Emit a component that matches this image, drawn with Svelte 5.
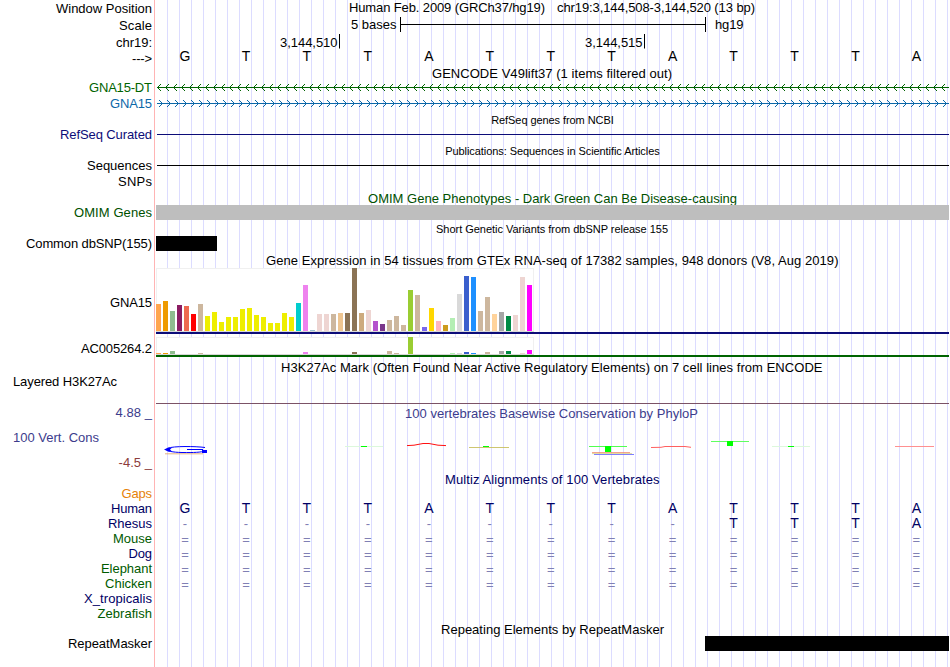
<script>
  const bases = 'GTTTATTTATTTA'.split('')
  const unaligned = Array(13).fill('=')

  // tissue color, GNA15 level, AC005264.2 level
  const tissues = [
    ['#ffa54f', 27, 1], ['#ee9a00', 30, 1], ['#8fbc8f', 20, 3], ['#8b1c62', 26, 0],
    ['#ee6a50', 25, 0], ['#ff0000', 17, 0], ['#cdb79e', 27, 1], ['#eeee00', 15, 0],
    ['#eeee00', 19, 0], ['#eeee00', 9, 0], ['#eeee00', 14, 0], ['#eeee00', 14, 0],
    ['#eeee00', 22, 0], ['#eeee00', 23, 0], ['#eeee00', 16, 0], ['#eeee00', 14, 0],
    ['#eeee00', 8, 0], ['#eeee00', 8, 0], ['#eeee00', 18, 0], ['#eeee00', 14, 0],
    ['#00cdcd', 28, 0], ['#ee82ee', 46, 2], ['#9ac0cd', 1, 0], ['#eed5d2', 17, 0],
    ['#eed5d2', 17, 0], ['#cdb79e', 17, 0], ['#eec591', 18, 0], ['#8b7355', 18, 0],
    ['#8b7355', 63, 2], ['#cdaa7d', 18, 0], ['#eed5d2', 21, 0], ['#b452cd', 10, 0],
    ['#7a378b', 7, 0], ['#cdb79e', 11, 3], ['#cdb79e', 15, 1], ['#cdb79e', 6, 0],
    ['#9acd32', 41, 17], ['#cdb79e', 36, 0], ['#7a67ee', 4, 0], ['#ffd700', 23, 0],
    ['#ffb6c1', 10, 0], ['#cd9b1d', 6, 0], ['#b4eeb4', 13, 1], ['#d9d9d9', 37, 1],
    ['#3a5fcd', 55, 2], ['#1e90ff', 54, 1], ['#cdb79e', 20, 0], ['#cdb79e', 34, 2],
    ['#ffd39b', 17, 0], ['#a6a6a6', 19, 3], ['#008b45', 15, 3], ['#eed5d2', 16, 0],
    ['#eed5d2', 54, 1], ['#ff00ff', 46, 4]
  ]

  // title: [x, baseline, length, text]
  const rows = [
    { h: 16, label: 'Window Position', w: 96, titles: [[193, 12, 196, 'Human Feb. 2009 (GRCh37/hg19)'], [401, 12, 198, 'chr19:3,144,508-3,144,520 (13 bp)']] },
    { h: 17, label: 'Scale', w: 33, kind: 'scale' },
    { h: 17, label: 'chr19:', w: 36, kind: 'ruler' },
    { h: 16, label: '--->', w: 20, kind: 'seq', cells: bases, y: 11 },
    { h: 14, titles: [[276, 12, 240, 'GENCODE V49lift37 (1 items filtered out)']] },
    { h: 15, label: 'GNA15-DT', w: 63, color: '#006400', kind: 'gene', y: 7, dir: -1 },
    { h: 16, label: 'GNA15', w: 42, color: '#0c68a8', kind: 'gene', y: 8, dir: 1 },
    { h: 16, small: true, titles: [[335.2, 13, 122.5, 'RefSeq genes from NCBI']] },
    { h: 15, label: 'RefSeq Curated', w: 92, color: '#0c0c78', kind: 'line', y: 7 },
    { h: 16, small: true, titles: [[289.2, 13, 214.5, 'Publications: Sequences in Scientific Articles']] },
    { h: 15, label: 'Sequences', w: 65, kind: 'line', y: 7 },
    { h: 16, label: 'SNPs', w: 34 },
    { h: 16, color: '#005000', titles: [[212, 14, 369, 'OMIM Gene Phenotypes - Dark Green Can Be Disease-causing']] },
    { h: 15, label: 'OMIM Genes', w: 78, color: '#005000', kind: 'block', x: 0, width: 793, fill: '#bebebe' },
    { h: 16, small: true, titles: [[280, 13, 232, 'Short Genetic Variants from dbSNP release 155']] },
    { h: 15, label: 'Common dbSNP(155)', w: 126, kind: 'block', x: 0, width: 61, fill: '#000000' },
    { h: 17, titles: [[110, 14, 572.5, 'Gene Expression in 54 tissues from GTEx RNA-seq of 17382 samples, 948 donors (V8, Aug 2019)']] },
    { h: 66, label: 'GNA15', w: 42, up: 24, kind: 'gtex', level: 1, top: 0, line: '#0c0c78' },
    { h: 24, label: 'AC005264.2', w: 71, up: 2, kind: 'gtex', level: 2, top: 3, line: '#006400' },
    { h: 16, titles: [[125, 14, 541.5, 'H3K27Ac Mark (Often Found Near Active Regulatory Elements) on 7 cell lines from ENCODE']] },
    { h: 30, label: 'Layered H3K27Ac', w: 104, left: true, up: 15, kind: 'signal' },
    { h: 16, label: '4.88 _', w: 36.5, color: '#3c3c8c', titles: [[249, 14, 293, '100 vertebrates Basewise Conservation by PhyloP']] },
    { h: 51, label: '100 Vert. Cons', w: 86, color: '#3c3c8c', left: true, up: 26, kind: 'phylop', below: '-4.5 _' },
    { h: 15, color: '#000064', titles: [[289, 13, 214.5, 'Multiz Alignments of 100 Vertebrates']] },
    { h: 15, label: 'Gaps', w: 30.5, color: '#e6820a' },
    { h: 15, label: 'Human', w: 41, color: '#000064', kind: 'seq', cells: bases, y: 12 },
    { h: 15, label: 'Rhesus', w: 44, color: '#000064', kind: 'seq', cells: '---------TTTA'.split(''), y: 12 },
    { h: 15, label: 'Mouse', w: 39, color: '#005a00', kind: 'seq', cells: unaligned, y: 13 },
    { h: 15, label: 'Dog', w: 23.5, color: '#000064', kind: 'seq', cells: unaligned, y: 13 },
    { h: 15, label: 'Elephant', w: 51, color: '#005a00', kind: 'seq', cells: unaligned, y: 13 },
    { h: 15, label: 'Chicken', w: 47, color: '#005a00', kind: 'seq', cells: unaligned, y: 13 },
    { h: 15, label: 'X_tropicalis', w: 68, color: '#000064' },
    { h: 15, label: 'Zebrafish', w: 54.5, color: '#005a00' },
    { h: 15, titles: [[285, 13, 223, 'Repeating Elements by RepeatMasker']] },
    { h: 15, label: 'RepeatMasker', w: 84, kind: 'block', x: 549, width: 244, fill: '#000000' },
    { h: 16 }
  ]

  function arrows(y, dir) {
    let d = ''
    for (let i = 0; i < 99; i++) {
      const x = (dir < 0 ? 1 : 6) + i * 8
      // pixel steps of the chevron, one square per row
      for (let s = 1; s <= 3; s++) {
        d += `M${x - dir * s} ${y - s}h1v1h-1zM${x - dir * s} ${y + s}h1v1h-1z`
      }
    }
    return d
  }
</script>

<div class="browser">
  {#each rows as row}
    <div class="row" style="height: {row.h}px; color: {row.color || '#000000'}">
      <div class="side">
        <svg width="154" height={row.h}>
          {#if row.label}
            <text
              x={row.left ? 13 : 152}
              y={row.h - 3 - (row.up || 0)}
              text-anchor={row.left ? 'start' : 'end'}
              textLength={row.w}
            >{row.label}</text>
          {/if}
          {#if row.below}
            <text class="low" x="152" y="47" text-anchor="end" textLength="33.5">{row.below}</text>
          {/if}
        </svg>
      </div>

      <svg class:small={row.small} width="793" height={row.h}>
        {#each row.titles || [] as [x, y, length, text]}
          <text {x} {y} textLength={length}>{text}</text>
        {/each}

        {#if row.kind === 'scale'}
          <text x="195" y="13" textLength="45.5">5 bases</text>
          <path class="ink" d="M244 1h1v15h-1zM549 1h1v15h-1zM244 8h306v1H244z" />
          <text x="559" y="13" textLength="28.5">hg19</text>
        {:else if row.kind === 'ruler'}
          <text x="124" y="14" textLength="57.5">3,144,510</text>
          <text x="429" y="14" textLength="57.5">3,144,515</text>
          <path class="ink" d="M183 1h1v14.500h-1zM488 1h1v14.500h-1z" />
        {:else if row.kind === 'seq'}
          {#each row.cells as base, i}
            <text
              class="base"
              class:faint={base === '-' || base === '='}
              x={29 + i * 60.95}
              y={row.y}
              text-anchor="middle"
            >{base}</text>
          {/each}
        {:else if row.kind === 'gene'}
          <rect x="1" y={row.y} width="792" height="1" fill="currentColor" />
          <path d={arrows(row.y, row.dir)} fill="currentColor" />
        {:else if row.kind === 'line'}
          <rect x="1" y={row.y} width="792" height="1" fill="currentColor" />
        {:else if row.kind === 'block'}
          <rect x={row.x} y="0" width={row.width} height="15" fill={row.fill} />
        {:else if row.kind === 'gtex'}
          {@const floor = row.level === 1 ? 63 : 20}
          <rect x="0" y={row.top} width="378" height={floor + 1 - row.top} fill="#f0f0f0" />
          <rect x="1" y={row.top + 1} width="376" height={floor - 1 - row.top} fill="#ffffff" />
          <rect x="0" y={floor} width="378" height="1" fill="#d8d8d8" />
          {#each tissues as tissue, i}
            <rect x={i * 7} y={floor - tissue[row.level]} width="5" height={tissue[row.level]} fill={tissue[0]} />
          {/each}
          <rect x="0" y={floor + 1} width="793" height="2" fill={row.line} />
        {:else if row.kind === 'signal'}
          <rect x="0" y="29" width="793" height="1" fill="#7b5266" />
        {:else if row.kind === 'phylop'}
          <!-- conservation logo, letters squashed to their score -->
          <path d="M49 27.500C40 26.200 17 26 12 28.200C7 30 14 32.300 26 32.500C38 32.700 45 32.300 49 31" fill="none" stroke="#0000ff" />
          <path class="blue" d="M8 29.500l4-1.800h4l-2 1.800 2 2h-4zM31 29h16v1h4v3h-5v-3H31z" />
          <path d="M9 33.800h38" stroke="#e0a060" stroke-width="0.8" />
          <path d="M189 26.500h38" stroke="#dcf8dc" />
          <path class="green" d="M205 26h6v1h-6z" />
          <path d="M251 25.600l7-.4 9-1.700h6l9 1.700 8 .4" fill="none" stroke="#ff1010" />
          <path d="M313 27.500h40" stroke="#c8c060" stroke-width="0.9" />
          <path class="green" d="M327 26h6v1h-6z" />
          <path d="M433 26.500h38" stroke="#50ff50" />
          <path class="green" d="M449 26h6v6h-6z" />
          <path d="M436 32.600h38" stroke="#f08060" stroke-width="0.8" />
          <path d="M436 33.600h40" stroke="#d8d080" stroke-width="0.8" />
          <path d="M438 34.500h40" stroke="#7070ff" stroke-width="0.9" />
          <path d="M495 27.500l10-.2 4-.8h20l6 .8 -0 0" fill="none" stroke="#ff6060" />
          <path d="M555 21.500h38" stroke="#60ff60" />
          <path class="green" d="M571 21h6v5h-6z" />
          <path d="M616 26.500h38" stroke="#dcf8dc" />
          <path class="green" d="M632 26h6v1h-6z" />
          <path d="M739 26.500h39" stroke="#ff9090" />
        {/if}
      </svg>
    </div>
  {/each}
</div>

<style>
  :global(body) {
    background: #ffffff;
  }

  .browser {
    width: 949px;
    height: 667px;
    overflow: hidden;
    font-family: "Liberation Sans", Arial, sans-serif;
    font-size: 13px;
    /* guide lines every 12px, right of the label column */
    background: repeating-linear-gradient(
        to right,
        transparent 0 11px,
        #dcdcff 11px 12px
      ) 156px 0 / 793px 100% no-repeat;
  }

  .row {
    display: flex;
  }

  .side {
    flex: none;
    width: 154px;
    border-right: 1px solid #ffb4b4;
    margin-right: 1px;
  }

  svg {
    display: block;
    flex: none;
    overflow: visible;
  }

  text {
    fill: currentColor;
    white-space: pre;
  }

  .small {
    font-size: 11px;
  }

  .base {
    font-size: 14px;
  }

  .faint {
    font-size: 13px;
    fill: #8080b4;
  }

  .low {
    fill: #8c3c3c;
  }

  .ink {
    fill: #000000;
  }

  .blue {
    fill: #0000ff;
  }

  .green {
    fill: #00ff00;
  }
</style>
